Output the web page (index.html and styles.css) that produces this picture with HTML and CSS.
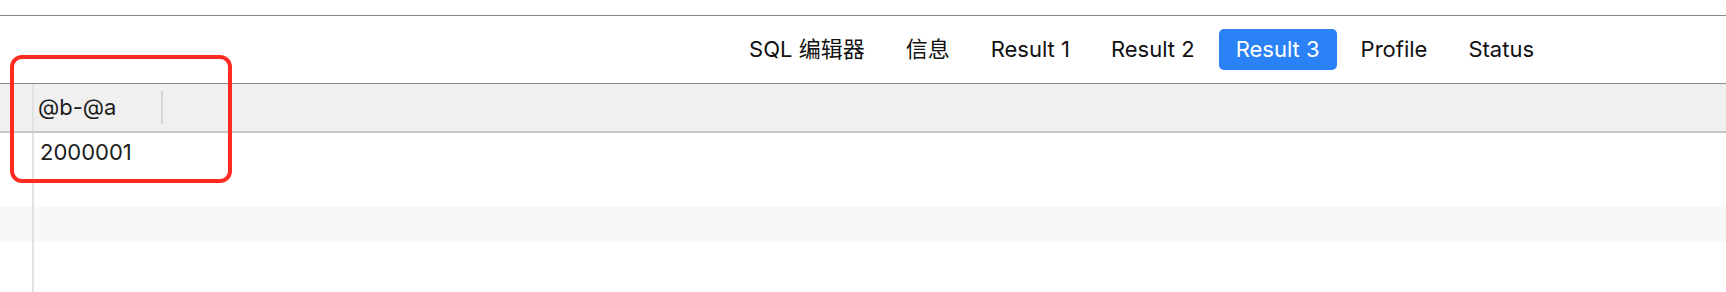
FILE: index.html
```html
<!DOCTYPE html>
<html lang="zh-CN">
<head>
    <meta charset="UTF-8">
    <meta name="viewport" content="width=device-width, initial-scale=1.0">
    <title>Result 3</title>
    <link rel="stylesheet" href="styles.css">
</head>
<body>

<div class="top-gap"></div>

<div class="tab-bar">
    <div class="tab">SQL 编辑器</div>
    <div class="tab">信息</div>
    <div class="tab">Result 1</div>
    <div class="tab">Result 2</div>
    <div class="tab active">Result 3</div>
    <div class="tab">Profile</div>
    <div class="tab">Status</div>
</div>

<div class="grid">
    <div class="grid-header">
        <div class="gutter"></div>
        <div class="col-head">@b-@a</div>
    </div>
    <div class="row data-row">
        <div class="gutter"></div>
        <div class="cell">2000001</div>
    </div>
    <div class="row empty-row">
        <div class="gutter"></div>
    </div>
    <div class="row empty-row stripe">
        <div class="gutter"></div>
    </div>
    <div class="row empty-row last">
        <div class="gutter"></div>
    </div>

    <div class="highlight"></div>
</div>

</body>
</html>
```

FILE: styles.css
```css
body {
    margin: 0;
    background: #fff;
    font-family: Inter, "Noto Sans CJK SC", sans-serif;
    color: #1d1d1d;
}
.top-gap {
    height: 15px;
    background: #fff;
    border-bottom: 1px solid #8a8a8a;
}
.tab-bar {
    height: 67px;
    display: flex;
    align-items: center;
    justify-content: flex-end;
    gap: 7px;
    padding-right: 175px;
    background: #fff;
    border-bottom: 1px solid #8a8a8a;
}
.tab {
    height: 41px;
    line-height: 41px;
    padding: 0 17px;
    font-size: 22px;
    color: #111;
    border-radius: 5px;
}
.tab.active {
    background-color: #2b82f6;
    color: #fff;
}
.grid {
    position: relative;
}
.grid-header {
    display: flex;
    height: 47px;
    background: #f0f0f0;
    border-bottom: 2px solid #c8c8c8;
}
.gutter {
    width: 32px;
    flex: none;
    border-right: 2px solid #e2e2e2;
}
.col-head {
    width: 125px;
    padding-left: 4px;
    font-size: 22px;
    line-height: 47px;
    display: flex;
    align-items: center;
    justify-content: space-between;
}
.col-head::after {
    content: "";
    width: 2px;
    height: 33px;
    background: #d6d6d6;
}
.row {
    display: flex;
}
.data-row {
    height: 39px;
}
.empty-row {
    height: 35px;
}
.empty-row.last {
    height: 60px;
}
.stripe {
    background: #f8f8f8;
}
.cell {
    padding-left: 6px;
    font-size: 22px;
    line-height: 39px;
}
.highlight {
    position: absolute;
    left: 10px;
    top: -29px;
    width: 214px;
    height: 120px;
    border: 4px solid #ff2b20;
    border-radius: 12px;
}
```
